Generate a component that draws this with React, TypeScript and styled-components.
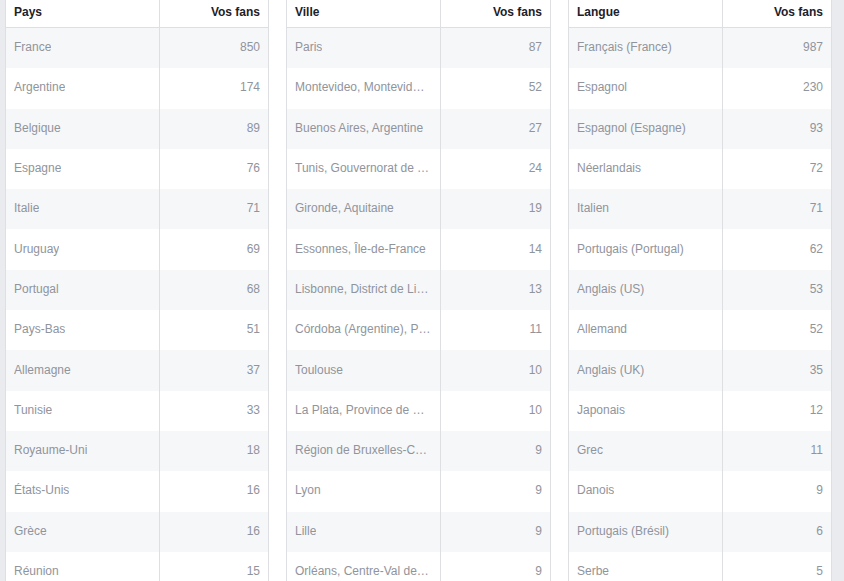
import styled, { createGlobalStyle } from "styled-components";

type Row = [string, number];

const countries: Row[] = [
  ["France", 850],
  ["Argentine", 174],
  ["Belgique", 89],
  ["Espagne", 76],
  ["Italie", 71],
  ["Uruguay", 69],
  ["Portugal", 68],
  ["Pays-Bas", 51],
  ["Allemagne", 37],
  ["Tunisie", 33],
  ["Royaume-Uni", 18],
  ["États-Unis", 16],
  ["Grèce", 16],
  ["Réunion", 15],
];

const cities: Row[] = [
  ["Paris", 87],
  ["Montevideo, Montevideo, Uruguay", 52],
  ["Buenos Aires, Argentine", 27],
  ["Tunis, Gouvernorat de Tunis", 24],
  ["Gironde, Aquitaine", 19],
  ["Essonnes, Île-de-France", 14],
  ["Lisbonne, District de Lisbonne", 13],
  ["Córdoba (Argentine), Province de Córdoba", 11],
  ["Toulouse", 10],
  ["La Plata, Province de Buenos Aires", 10],
  ["Région de Bruxelles-Capitale", 9],
  ["Lyon", 9],
  ["Lille", 9],
  ["Orléans, Centre-Val de Loire", 9],
];

const languages: Row[] = [
  ["Français (France)", 987],
  ["Espagnol", 230],
  ["Espagnol (Espagne)", 93],
  ["Néerlandais", 72],
  ["Italien", 71],
  ["Portugais (Portugal)", 62],
  ["Anglais (US)", 53],
  ["Allemand", 52],
  ["Anglais (UK)", 35],
  ["Japonais", 12],
  ["Grec", 11],
  ["Danois", 9],
  ["Portugais (Brésil)", 6],
  ["Serbe", 5],
];

const GlobalStyle = createGlobalStyle`
  html, body {
    margin: 0;
    padding: 0;
    background: #e9ebee;
    font-family: "Liberation Sans", Arial, Helvetica, sans-serif;
    overflow: hidden;
  }
`;

const Panel = styled.div`
  display: flex;
  gap: 17px;
  width: 827px;
  margin-left: 5px;
  background: #fff;
`;

const Table = styled.div`
  width: 264px;
  border-left: 1px solid #dddfe2;
  border-right: 1px solid #dddfe2;
  box-sizing: border-box;
  flex: none;
  &:nth-child(2) {
    width: 265px;
  }
`;

const Line = styled.div<{ $striped?: boolean; $head?: boolean }>`
  display: grid;
  grid-template-columns: 153px 1fr;
  height: ${(p) => (p.$head ? "27px" : "40.3px")};
  background: ${(p) => (p.$striped ? "#f6f7f9" : "#fff")};
  border-bottom: ${(p) => (p.$head ? "1px solid #dddfe2" : "none")};
  font-size: 12px;
  font-weight: ${(p) => (p.$head ? "bold" : "normal")};
  color: ${(p) => (p.$head ? "#1d2129" : "#90949c")};
`;

const Cell = styled.div<{ $num?: boolean; $head?: boolean }>`
  display: flex;
  align-items: center;
  justify-content: ${(p) => (p.$num ? "flex-end" : "flex-start")};
  padding: ${(p) => (p.$num ? "0 8px 0 0" : "0 9px 0 8px")};
  padding-bottom: ${(p) => (p.$head ? "3px" : "2px")};
  border-left: ${(p) => (p.$num ? "1px solid #dddfe2" : "none")};
  min-width: 0;
  overflow: hidden;
`;

const Label = styled.span`
  overflow: hidden;
  white-space: nowrap;
  text-overflow: ellipsis;
`;

const StatTable = ({ title, rows }: { title: string; rows: Row[] }) => (
  <Table>
    <Line $head>
      <Cell $head>{title}</Cell>
      <Cell $head $num>
        Vos fans
      </Cell>
    </Line>
    {rows.map(([name, fans], i) => (
      <Line key={name} $striped={i % 2 === 0}>
        <Cell>
          <Label>{name}</Label>
        </Cell>
        <Cell $num>{fans}</Cell>
      </Line>
    ))}
  </Table>
);

const App = () => (
  <>
    <GlobalStyle />
    <Panel>
      <StatTable title="Pays" rows={countries} />
      <StatTable title="Ville" rows={cities} />
      <StatTable title="Langue" rows={languages} />
    </Panel>
  </>
);

export default App;
